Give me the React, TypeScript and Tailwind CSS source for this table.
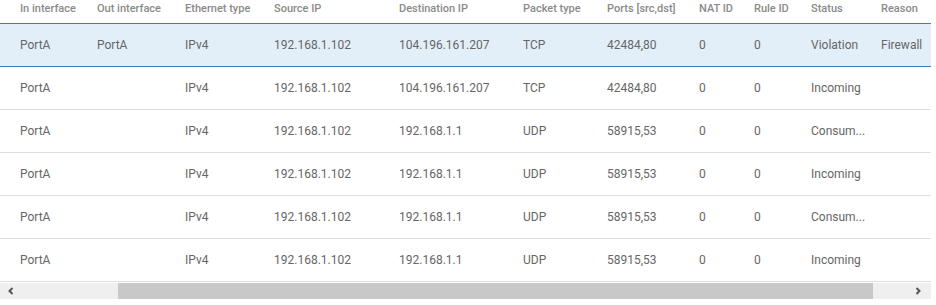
import React from "react";

const cols = [
  { label: "In interface", w: 97 },
  { label: "Out interface", w: 88 },
  { label: "Ethernet type", w: 89 },
  { label: "Source IP", w: 125 },
  { label: "Destination IP", w: 124 },
  { label: "Packet type", w: 84 },
  { label: "Ports [src,dst]", w: 92 },
  { label: "NAT ID", w: 55 },
  { label: "Rule ID", w: 57 },
  { label: "Status", w: 70 },
  { label: "Reason", w: 90 },
];

const rows = [
  ["PortA", "PortA", "IPv4", "192.168.1.102", "104.196.161.207", "TCP", "42484,80", "0", "0", "Violation", "Firewall"],
  ["PortA", "", "IPv4", "192.168.1.102", "104.196.161.207", "TCP", "42484,80", "0", "0", "Incoming", ""],
  ["PortA", "", "IPv4", "192.168.1.102", "192.168.1.1", "UDP", "58915,53", "0", "0", "Consum...", ""],
  ["PortA", "", "IPv4", "192.168.1.102", "192.168.1.1", "UDP", "58915,53", "0", "0", "Incoming", ""],
  ["PortA", "", "IPv4", "192.168.1.102", "192.168.1.1", "UDP", "58915,53", "0", "0", "Consum...", ""],
  ["PortA", "", "IPv4", "192.168.1.102", "192.168.1.1", "UDP", "58915,53", "0", "0", "Incoming", ""],
];

export default function App() {
  return (
    <div className="w-[936px] h-[305px] bg-white" style={{ fontFamily: "Roboto, 'Liberation Sans', sans-serif" }}>
      <div className="w-[931px] overflow-hidden">
        <div className="flex h-[24px] border-b border-[#2a84c9] items-start pt-[1px]">
          {cols.map((c, i) => (
            <div
              key={i}
              className={`shrink-0 text-[11px] leading-[16px] font-medium text-[#8a8a8a] whitespace-nowrap ${i === 0 ? "pl-[20px]" : ""}`}
              style={{ width: c.w }}
            >
              {c.label}
            </div>
          ))}
        </div>
        {rows.map((r, ri) => (
          <div
            key={ri}
            className={`flex h-[43px] items-center border-b ${ri === 0 ? "bg-[#e3eff8] border-[#2a84c9]" : "border-[#dedede]"}`}
          >
            {r.map((v, ci) => (
              <div
                key={ci}
                className={`shrink-0 text-[12px] leading-[16px] text-[#666666] whitespace-nowrap ${ci === 0 ? "pl-[20px]" : ""}`}
                style={{ width: cols[ci].w }}
              >
                {v}
              </div>
            ))}
          </div>
        ))}
        <div className="h-[1px]" />
        <div className="flex h-[16px] bg-[#efefef] items-center">
          <div className="w-[118px] shrink-0 flex items-center pl-[7px]">
            <svg width="8" height="8" viewBox="0 0 8 8"><path d="M5.5 1 L2.5 4 L5.5 7" stroke="#555" strokeWidth="2" fill="none" /></svg>
          </div>
          <div className="w-[755px] shrink-0 h-full bg-[#c8c8c8]" />
          <div className="flex-1 flex items-center justify-end pr-[9px]">
            <svg width="8" height="8" viewBox="0 0 8 8"><path d="M2.5 1 L5.5 4 L2.5 7" stroke="#555" strokeWidth="2" fill="none" /></svg>
          </div>
        </div>
      </div>
    </div>
  );
}
